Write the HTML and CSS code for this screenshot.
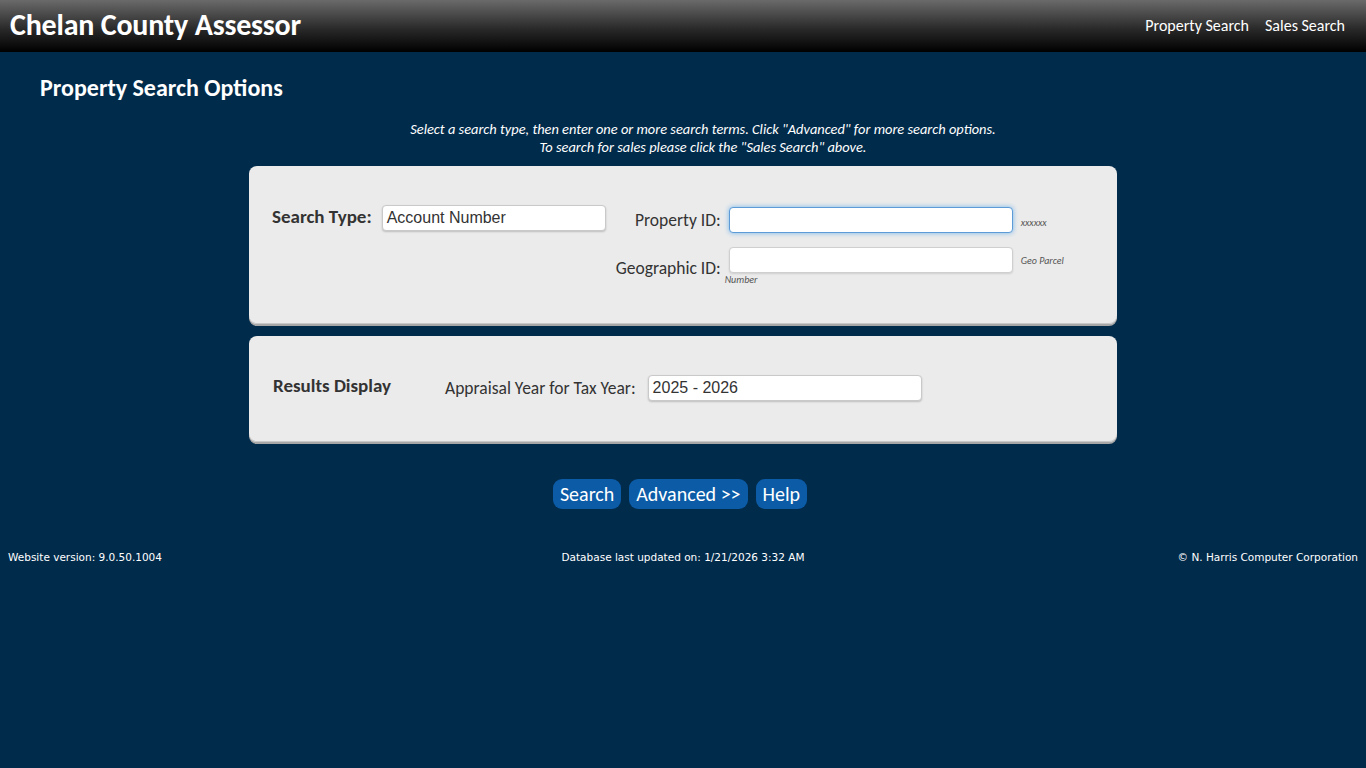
FILE: index.html
```html
<!DOCTYPE html>
<html lang="en">
<head>
<meta charset="utf-8">
<title>Chelan County Assessor</title>
<link rel="stylesheet" href="styles.css">
</head>
<body>
<header class="topbar">
  <div class="brand">Chelan County Assessor</div>
  <nav class="nav">
    <a href="#">Property Search</a>
    <a href="#">Sales Search</a>
  </nav>
</header>
<main class="main">
  <h1 class="page-title">Property Search Options</h1>
  <p class="intro">Select a search type, then enter one or more search terms. Click "Advanced" for more search options.<br>To search for sales please click the "Sales Search" above.</p>

  <section class="panel panel-search">
    <div class="type-group">
      <span class="type-label">Search Type:</span>
      <div class="select">Account Number</div>
    </div>
    <div class="fields">
      <label class="field-label lbl-prop">Property ID:</label>
      <div class="input focused"></div>
      <span class="hint hint-prop">xxxxxx</span>
      <label class="field-label lbl-geo">Geographic ID:</label>
      <div class="input"></div>
      <span class="hint hint-geo">Geo Parcel</span>
      <span class="hint hint-num">Number</span>
    </div>
  </section>

  <section class="panel panel-results">
    <span class="results-title">Results Display</span>
    <span class="year-label">Appraisal Year for Tax Year:</span>
    <div class="select select-year">2025 - 2026</div>
  </section>

  <div class="actions">
    <button class="btn">Search</button>
    <button class="btn">Advanced &gt;&gt;</button>
    <button class="btn">Help</button>
  </div>
</main>
<footer class="footer">
  <span class="foot-left">Website version: 9.0.50.1004</span>
  <span class="foot-center">Database last updated on: 1/21/2026 3:32 AM</span>
  <span class="foot-right">© N. Harris Computer Corporation</span>
</footer>
</body>
</html>
```

FILE: styles.css
```css
* { box-sizing: border-box; }
html, body { margin: 0; padding: 0; }
body {
  background: #012b4b;
  font-family: "Carlito", "Lato", sans-serif;
  color: #fff;
  min-height: 768px;
}
.topbar {
  height: 52px;
  background: linear-gradient(#6a6a6a 0%, #2a2a2a 55%, #000 100%);
  display: flex;
  align-items: center;
  justify-content: space-between;
  padding: 0 21px 0 10px;
}
.brand {
  font-size: 30px;
  font-weight: bold;
  color: #fff;
  letter-spacing: -0.2px;
  margin-top: -4px;
}
.nav { display: flex; gap: 16px; }
.nav a {
  color: #fff;
  text-decoration: none;
  font-size: 16px;
  margin-top: -1px;
}
.main {
  display: flex;
  flex-direction: column;
  align-items: center;
}
.page-title {
  align-self: flex-start;
  margin: 22px 0 0 40px;
  font-size: 24px;
  font-weight: bold;
  line-height: 28px;
}
.intro {
  margin: 18px 0 0 40px;
  font-style: italic;
  font-size: 14.4px;
  line-height: 18px;
  text-align: center;
}
.panel {
  width: 868px;
  background: #ebebeb;
  border-radius: 8px;
  box-shadow: 0 2px 0 #a7a7a7, inset 0 -1px 0 #c8c8c8;
  color: #333;
}
.panel-search {
  margin-top: 10px;
  height: 158px;
  display: flex;
  align-items: flex-start;
  padding: 39px 0 0 23px;
}
.type-group { display: flex; align-items: center; gap: 10px; }
.type-label { font-size: 19px; font-weight: bold; color: #333; margin-top: -4px; }
.select {
  width: 224px;
  height: 26px;
  background: #fff;
  border: 1px solid #c9c9c9;
  border-radius: 4px;
  box-shadow: 0 1px 2px rgba(0,0,0,0.2);
  font-family: "Liberation Sans", Arial, sans-serif;
  font-size: 16px;
  color: #333;
  padding: 3px 4px;
  line-height: 18px;
}
.fields {
  margin-left: 7px;
  display: grid;
  grid-template-columns: 108px 284px auto;
  column-gap: 8px;
  row-gap: 14px;
  align-items: center;
  margin-top: 2px;
}
.field-label {
  text-align: right;
  font-size: 17.5px;
  color: #333;
}
.lbl-geo { margin-top: 8px; margin-bottom: -8px; }
.input {
  height: 26px;
  background: #fff;
  border: 1px solid #cfcfcf;
  border-radius: 4px;
  box-shadow: 0 1px 2px rgba(0,0,0,0.12);
}
.input.focused {
  border: 1px solid #5d9bd6;
  box-shadow: 0 0 5px rgba(82,168,236,0.8);
}
.hint {
  font-style: italic;
  font-size: 10px;
  color: #555;
}
.hint-prop { margin-top: 4px; }
.hint-geo { margin-top: 1px; }
.hint-num {
  grid-column: 2;
  margin: -16px 0 0 -4px;
}
.panel-results {
  margin-top: 12px;
  height: 106px;
  display: flex;
  align-items: center;
  padding: 0 0 4px 24px;
}
.results-title { font-size: 19px; font-weight: bold; color: #333; width: 172px; margin-top: -3px; }
.year-label { font-size: 17.5px; color: #333; margin-top: 2px; }
.select-year {
  margin-left: 12px;
  width: 274px;
  margin-top: 2px;
}
.actions {
  margin-top: 37px;
  display: flex;
  gap: 8px;
  margin-left: -6px;
}
.btn {
  height: 30px;
  padding: 0 7px;
  background: #0b5ba7;
  color: #fff;
  border: none;
  border-radius: 9px;
  font-family: "Carlito", "Lato", sans-serif;
  font-size: 20px;
  line-height: 30px;
}
.footer {
  display: grid;
  grid-template-columns: 1fr auto 1fr;
  padding: 0 8px;
  margin-top: 42px;
  font-family: "DejaVu Sans", Tahoma, sans-serif;
  font-size: 10.5px;
  color: #fff;
}
.foot-left { justify-self: start; }
.foot-center { justify-self: center; }
.foot-right { justify-self: end; }
```
